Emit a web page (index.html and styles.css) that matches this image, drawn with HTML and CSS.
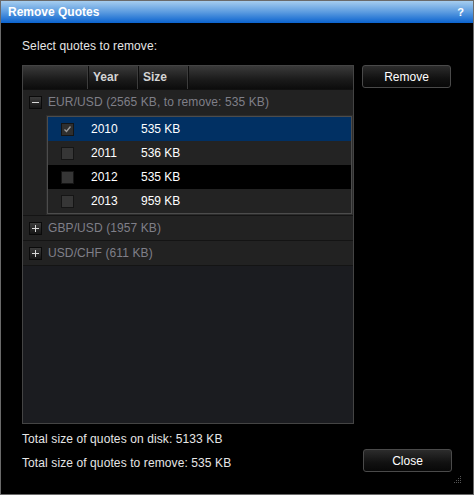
FILE: index.html
```html
<!DOCTYPE html>
<html lang="en">
<head>
    <meta charset="UTF-8">
    <title>Remove Quotes</title>
    <link rel="stylesheet" href="styles.css">
</head>
<body>
    <div class="window">
        <!-- Title Bar -->
        <div class="titlebar">
            <span class="title">Remove Quotes</span>
            <span class="help">?</span>
        </div>

        <div class="content">
            <div class="prompt">Select quotes to remove:</div>

            <div class="main">
                <!-- Quotes Tree -->
                <div class="tree">
                    <div class="tree-head">
                        <div class="col col-check"></div>
                        <div class="col col-year">Year</div>
                        <div class="col col-size">Size</div>
                        <div class="col-rest"></div>
                    </div>

                    <div class="tree-body">
                        <div class="group">
                            <div class="group-row">
                                <span class="toggle">
                                    <svg width="7" height="7" viewBox="0 0 7 7"><path d="M0 3.5h7" stroke="#d8d8d8" stroke-width="1"/></svg>
                                </span>
                                <span class="group-label">EUR/USD (2565 KB, to remove: 535 KB)</span>
                            </div>
                            <div class="children">
                                <div class="rows">
                                    <div class="row selected">
                                        <span class="check checked">
                                            <svg width="9" height="9" viewBox="0 0 9 9"><path d="M1.5 4.5l2 2 4-5" fill="none" stroke="#9a9a9a" stroke-width="1.3"/></svg>
                                        </span>
                                        <span class="year">2010</span>
                                        <span class="size">535 KB</span>
                                    </div>
                                    <div class="row">
                                        <span class="check"></span>
                                        <span class="year">2011</span>
                                        <span class="size">536 KB</span>
                                    </div>
                                    <div class="row alt">
                                        <span class="check"></span>
                                        <span class="year">2012</span>
                                        <span class="size">535 KB</span>
                                    </div>
                                    <div class="row">
                                        <span class="check"></span>
                                        <span class="year">2013</span>
                                        <span class="size">959 KB</span>
                                    </div>
                                </div>
                            </div>
                        </div>

                        <div class="group">
                            <div class="group-row">
                                <span class="toggle">
                                    <svg width="7" height="7" viewBox="0 0 7 7"><path d="M0 3.5h7M3.5 0v7" stroke="#d8d8d8" stroke-width="1"/></svg>
                                </span>
                                <span class="group-label">GBP/USD (1957 KB)</span>
                            </div>
                        </div>

                        <div class="group">
                            <div class="group-row">
                                <span class="toggle">
                                    <svg width="7" height="7" viewBox="0 0 7 7"><path d="M0 3.5h7M3.5 0v7" stroke="#d8d8d8" stroke-width="1"/></svg>
                                </span>
                                <span class="group-label">USD/CHF (611 KB)</span>
                            </div>
                        </div>
                    </div>
                </div>

                <div class="side">
                    <button class="btn">Remove</button>
                </div>
            </div>

            <!-- Totals -->
            <div class="footer">
                <div class="totals">
                    <div class="total">Total size of quotes on disk: 5133 KB</div>
                    <div class="total">Total size of quotes to remove: 535 KB</div>
                </div>
                <button class="btn close">Close</button>
            </div>
        </div>

        <svg class="grip" width="8" height="8" viewBox="0 0 8 8">
            <rect x="6" y="0" width="1" height="1" fill="#555"/>
            <rect x="4" y="2" width="1" height="1" fill="#555"/>
            <rect x="6" y="2" width="1" height="1" fill="#555"/>
            <rect x="2" y="4" width="1" height="1" fill="#555"/>
            <rect x="4" y="4" width="1" height="1" fill="#555"/>
            <rect x="6" y="4" width="1" height="1" fill="#555"/>
            <rect x="0" y="6" width="1" height="1" fill="#555"/>
            <rect x="2" y="6" width="1" height="1" fill="#555"/>
            <rect x="4" y="6" width="1" height="1" fill="#555"/>
            <rect x="6" y="6" width="1" height="1" fill="#555"/>
        </svg>
    </div>
</body>
</html>
```

FILE: styles.css
```css
body {
    margin: 0;
    padding: 0;
    background: #000;
    font-family: "Liberation Sans", Arial, sans-serif;
    font-size: 12px;
    color: #e6e6e6;
}

.window {
    position: relative;
    width: 474px;
    height: 495px;
    box-sizing: border-box;
    border: 1px solid #6a6a6a;
    background: #000;
    display: flex;
    flex-direction: column;
}

/* Title Bar */
.titlebar {
    height: 22px;
    display: flex;
    align-items: center;
    justify-content: space-between;
    padding: 0 9px 0 7px;
    background: linear-gradient(#a6cdef, #5c9ce0 50%, #0b63cf);
    color: #fff;
    font-weight: bold;
    font-size: 12px;
}

.help {
    font-size: 11px;
}

.content {
    flex: 1;
    display: flex;
    flex-direction: column;
    padding: 0 21px;
}

.prompt {
    margin-top: 16px;
    line-height: 14px;
    letter-spacing: 0.1px;
}

.main {
    display: flex;
    gap: 8px;
    margin-top: 12px;
}

/* Tree */
.tree {
    width: 332px;
    height: 359px;
    box-sizing: border-box;
    border: 1px solid #444;
    background: #1b1c20;
    display: flex;
    flex-direction: column;
}

.tree-head {
    display: flex;
    height: 23px;
    background: linear-gradient(#3a3a3a, #1a1a1a 60%, #0c0c0c);
    border-bottom: 1px solid #101010;
}

.col {
    box-sizing: border-box;
    border-right: 1px solid #0c0c0c;
    box-shadow: inset -1px 0 #3c3c3c;
    font-weight: bold;
    color: #d4d4d4;
    line-height: 23px;
    padding-left: 4px;
}

.col-check {
    width: 66px;
}

.col-year {
    width: 50px;
}

.col-size {
    width: 50px;
}

.col-rest {
    flex: 1;
}

.group {
    background: #222;
    border-bottom: 1px solid #141414;
}

.group-row {
    height: 24px;
    display: flex;
    align-items: center;
    padding-left: 6px;
}

.toggle {
    width: 11px;
    height: 11px;
    border: 1px solid #0a0a0a;
    background: linear-gradient(#3c3c3c, #151515);
    display: flex;
    align-items: center;
    justify-content: center;
    margin-right: 6px;
}

.group-label {
    color: #7f7f88;
    letter-spacing: 0.1px;
}

.children {
    padding: 2px 1px 1px 24px;
}

.rows {
    border: 1px solid #4c4c4c;
    box-shadow: 0 0 0 1px #2c2c2c;
}

.row {
    height: 24px;
    display: flex;
    align-items: center;
    background: #232323;
    color: #fff;
}

.row.selected {
    background: #013063;
}

.row.alt {
    background: #000;
}

.check {
    width: 11px;
    height: 11px;
    margin-left: 13px;
    border: 1px solid #151515;
    background: #363636;
    display: flex;
    align-items: center;
    justify-content: center;
}

.check.checked {
    background: #2f2f2f;
}

.year {
    width: 50px;
    margin-left: 17px;
}

/* Buttons */
.btn {
    width: 89px;
    height: 23px;
    box-sizing: border-box;
    border: 1px solid #4a4a4a;
    border-radius: 3px;
    background: linear-gradient(#2c2c2c, #111 60%, #080808);
    color: #fff;
    font-family: "Liberation Sans", Arial, sans-serif;
    font-size: 12px;
    padding: 0;
}

.footer {
    display: flex;
    justify-content: space-between;
    margin-top: 8px;
}

.totals {
    display: flex;
    flex-direction: column;
}

.total {
    line-height: 14px;
    margin-bottom: 10px;
    letter-spacing: 0.1px;
}

.close {
    margin-top: 17px;
}

.grip {
    position: absolute;
    right: 11px;
    bottom: 10px;
}
```
